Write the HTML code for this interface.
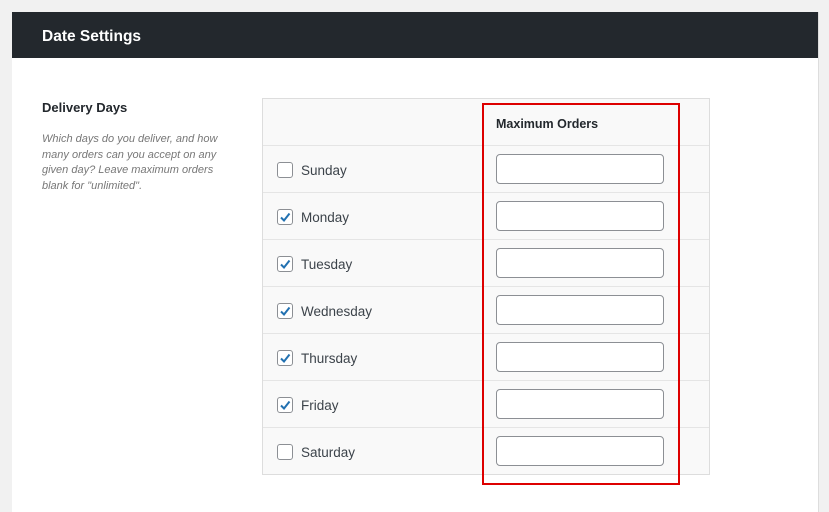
<!DOCTYPE html>
<html><head><style>
body{margin:0;width:829px;height:494px;background:#f1f1f1;font-family:"Liberation Sans",sans-serif;position:relative;overflow:hidden}
.panel{position:absolute;left:12px;top:12px;width:806px;height:500px;background:#fff;border-right:1px solid #ddd}
.hdr{position:absolute;left:12px;top:12px;width:806px;height:46px;background:#23282d;color:#fff;font-weight:bold;font-size:15.5px;line-height:50px;padding-left:30px;box-sizing:border-box}
.lbl{position:absolute;left:42px;top:100px;font-size:13px;color:#23282d;font-weight:bold}
.desc{position:absolute;left:42px;top:132px;width:200px;font-size:11px;line-height:15.5px;color:#777;font-style:italic}
.tbl{position:absolute;left:262px;top:98px;width:446px;height:375px;border:1px solid #ddd;background:#f9f9f9}
.mh{position:absolute;left:233px;top:18px;font-weight:bold;font-size:12.5px;color:#23282d}
.row{position:absolute;left:0;width:446px;height:47px;border-top:1px solid #e5e5e5}
.cb{position:absolute;left:14px;top:16px;width:14px;height:14px;border:1px solid #8c8f94;border-radius:3px;background:#fff}
.day{position:absolute;left:38px;top:17px;font-size:13.5px;color:#3c434a}
.in{position:absolute;left:233px;top:8px;width:166px;height:28px;border:1px solid #8c8f94;border-radius:4px;background:#fff}
.red{position:absolute;left:482px;top:103px;width:194px;height:378px;border:2px solid #d00}
</style></head><body>
<div class="panel"></div>
<div class="hdr">Date Settings</div>
<div class="lbl">Delivery Days</div>
<div class="desc">Which days do you deliver, and how many orders can you accept on any given day? Leave maximum orders blank for "unlimited".</div>
<div class="tbl">
<div class="mh">Maximum Orders</div>
<div class="row" style="top:46px"><div class="cb"></div><div class="day">Sunday</div><div class="in"></div></div>
<div class="row" style="top:93px"><div class="cb"><svg width="14" height="14" viewBox="0 0 14 14"><path d="M3 7.5l3 3 5.5-7" stroke="#2271b1" stroke-width="2" fill="none"/></svg></div><div class="day">Monday</div><div class="in"></div></div>
<div class="row" style="top:140px"><div class="cb"><svg width="14" height="14" viewBox="0 0 14 14"><path d="M3 7.5l3 3 5.5-7" stroke="#2271b1" stroke-width="2" fill="none"/></svg></div><div class="day">Tuesday</div><div class="in"></div></div>
<div class="row" style="top:187px"><div class="cb"><svg width="14" height="14" viewBox="0 0 14 14"><path d="M3 7.5l3 3 5.5-7" stroke="#2271b1" stroke-width="2" fill="none"/></svg></div><div class="day">Wednesday</div><div class="in"></div></div>
<div class="row" style="top:234px"><div class="cb"><svg width="14" height="14" viewBox="0 0 14 14"><path d="M3 7.5l3 3 5.5-7" stroke="#2271b1" stroke-width="2" fill="none"/></svg></div><div class="day">Thursday</div><div class="in"></div></div>
<div class="row" style="top:281px"><div class="cb"><svg width="14" height="14" viewBox="0 0 14 14"><path d="M3 7.5l3 3 5.5-7" stroke="#2271b1" stroke-width="2" fill="none"/></svg></div><div class="day">Friday</div><div class="in"></div></div>
<div class="row" style="top:328px"><div class="cb"></div><div class="day">Saturday</div><div class="in"></div></div>
</div>
<div class="red"></div>
</body></html>
